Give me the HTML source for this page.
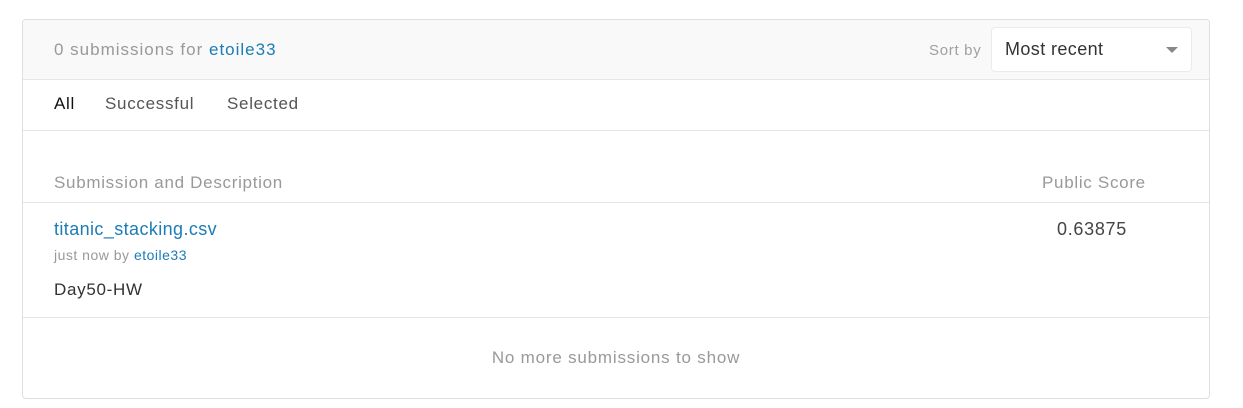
<!DOCTYPE html>
<html><head><style>
body{margin:0;background:#fff;font-family:"Liberation Sans",sans-serif;width:1243px;height:408px;position:relative;overflow:hidden}
.box{position:absolute;left:22px;top:19px;width:1188px;height:380px;border:1px solid #dedfe0;border-radius:4px;box-sizing:border-box}
.hdr{position:absolute;left:0;top:0;right:0;height:59px;background:#f9f9f9;border-bottom:1px solid #e6e6e6;border-radius:4px 4px 0 0}
.t{position:absolute;white-space:nowrap;letter-spacing:0.7px}
.blue{color:#1c7cb5}
.sel{position:absolute;left:968px;top:7px;width:201px;height:45px;background:#fff;border:1px solid #ebebeb;border-radius:4px;box-sizing:border-box}
.line{position:absolute;left:0;right:0;height:1px;background:#e6e6e6}
</style></head><body>
<div class="box">
<div class="hdr">
<div class="t" style="left:31px;top:20px;font-size:17px;color:#999;letter-spacing:1px">0 submissions for <span class="blue">etoile33</span></div>
<div class="t" style="left:906px;top:22px;font-size:15px;color:#a0a0a0">Sort by</div>
<div class="sel"><div class="t" style="left:13px;top:11px;font-size:18px;color:#333;letter-spacing:0.4px">Most recent</div>
<div style="position:absolute;left:174px;top:19px;border-left:6px solid transparent;border-right:6px solid transparent;border-top:6px solid #888"></div></div>
</div>
<div class="t" style="left:31px;top:74px;font-size:17px;color:#111">All</div>
<div class="t" style="left:82px;top:74px;font-size:17px;color:#555">Successful</div>
<div class="t" style="left:204px;top:74px;font-size:17px;color:#555">Selected</div>
<div class="line" style="top:110px"></div>
<div class="t" style="left:31px;top:153px;font-size:17px;color:#999">Submission and Description</div>
<div class="t" style="left:1019px;top:153px;font-size:17px;color:#999">Public Score</div>
<div class="line" style="top:182px"></div>
<div class="t blue" style="left:31px;top:199px;font-size:18px;letter-spacing:0.4px">titanic_stacking.csv</div>
<div class="t" style="left:31px;top:227px;font-size:14px;color:#999;letter-spacing:0.5px">just now by <span class="blue">etoile33</span></div>
<div class="t" style="left:31px;top:260px;font-size:17px;color:#333">Day50-HW</div>
<div class="t" style="left:1034px;top:199px;font-size:18px;color:#444">0.63875</div>
<div class="line" style="top:297px"></div>
<div class="t" style="left:0;right:0;top:328px;text-align:center;font-size:17px;color:#999;letter-spacing:0.8px">No more submissions to show</div>
</div>
</body></html>
